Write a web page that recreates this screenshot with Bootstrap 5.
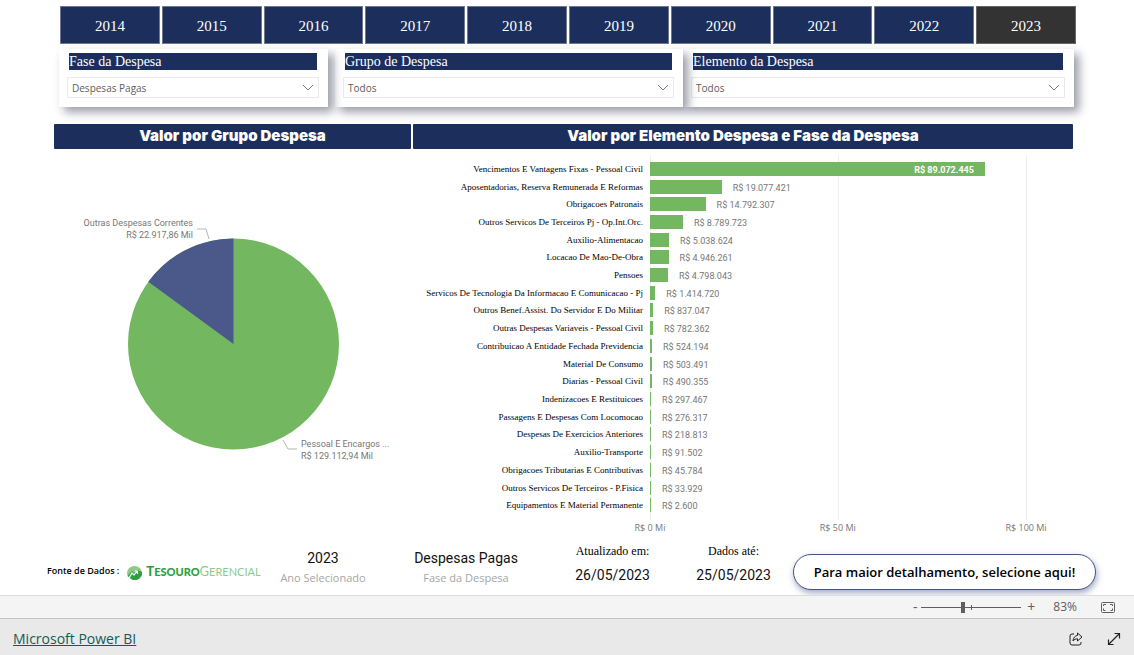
<!DOCTYPE html>
<html lang="pt-BR">
<head>
<meta charset="utf-8">
<meta name="viewport" content="width=device-width, initial-scale=1">
<title>Despesas - Microsoft Power BI</title>
<link href="https://cdn.jsdelivr.net/npm/bootstrap@5.3.0/dist/css/bootstrap.min.css" rel="stylesheet">
<style>
  :root { --navy: #1c2f5c; --leaf: #73b761; --din: Roboto, sans-serif; --segoe: "Open Sans", sans-serif; --times: "Liberation Serif", serif; }
  body { font-family: var(--segoe); color: #111; background: #fff; }
  .years { padding: 6px 58px 0 60px; gap: 2px; }
  .year-btn { height: 38px; padding-top: 3px; background: var(--navy); color: #fff; border: 1px solid #6f7891; font: 15px/20px var(--times); }
  .year-btn.active { background: #333; border-color: #666; }
  .slicers { display: grid; grid-template-columns: 276fr 348fr 391fr; padding: 5px 60px 0 59px; }
  .slicer { position: relative; height: 58px; padding: 4px 9px 0 8px; background: #fff; box-shadow: 5px 5px 9px rgba(28, 35, 60, .45); }
  .slicer:nth-child(1) { z-index: 3; margin-right: 7px; }
  .slicer:nth-child(2) { z-index: 2; }
  .slicer:nth-child(3) { z-index: 1; }
  .slicer label { display: block; height: 17px; margin: 0 2px 7px; background: var(--navy); color: #fff; font: 14px/17px var(--times); }
  .slicer .form-select { height: 21px; padding: 0 24px 0 4px; border: 1px solid #eaeaea; border-radius: 0; color: #605e5c; background-color: transparent; font-size: 10px; line-height: 18px; background-position: right 4px center; background-size: 12px 7px;
    --bs-form-select-bg-img: url("data:image/svg+xml,%3Csvg xmlns='http://www.w3.org/2000/svg' viewBox='0 0 12 7'%3E%3Cpath d='M1 1l5 5 5-5' fill='none' stroke='%23777'/%3E%3C/svg%3E"); }
  .charts { display: grid; grid-template-columns: 357fr 660fr; gap: 0 2px; padding: 17px 61px 0 54px; }
  .chart-title { height: 25px; margin: 0; background: var(--navy); color: #fff; border-radius: 1px; font: 900 15px/23px Inter, sans-serif; text-align: center; }
  .pie { display: block; width: 100%; height: 380px; font: 9px var(--din); }
  .plot { position: relative; padding: 11px 0 6px; }
  .gridlines { position: absolute; top: 6px; right: 0; bottom: 0; left: 237px; }
  .gridlines i { position: absolute; top: 0; bottom: 0; width: 1px; background: #eee; }
  .bars { position: relative; display: flex; flex-direction: column; height: 354px; }
  .bar-row { display: flex; flex: 1 1 0; align-items: center; }
  .bar-name { flex: 0 0 230px; margin-right: 7px; text-align: right; white-space: nowrap; color: #000; font: 9px/12px var(--times); }
  .bar-track { flex: 1; display: flex; align-items: center; }
  .bar-fill { flex: none; height: 14px; min-width: 1px; background: var(--leaf); }
  .bar-val { padding: 2px 0 0 11px; color: #777; font: 9px/12px var(--din); white-space: nowrap; }
  .bar-fill .bar-val { display: block; padding: 2px 11px 0 0; text-align: right; color: #fff; font-weight: 700; }
  .ticks { position: relative; height: 16px; margin-left: 237px; color: #777; font: 9px/16px var(--segoe); }
  .ticks span { position: absolute; transform: translateX(-50%); white-space: nowrap; }
  .facts { height: 59px; padding: 4px 38px 0 47px; }
  .source { width: 215px; padding-top: 22px; color: #000; font: 600 9px/18px var(--segoe); }
  .brand-name { font: 900 11px/18px Lato, sans-serif; color: #2c9f3c; }
  .brand-name b { font-size: 13px; font-weight: inherit; }
  .brand-name .light { font-weight: 400; color: #8fca8b; }
  .fact { text-align: center; white-space: nowrap; }
  .f1 { width: 122px; } .f2 { width: 164px; } .f3 { width: 129px; } .f4 { width: 113px; }
  .fact-num { color: #111; font: 14px/20px var(--din); }
  .fact-cap { color: #a6a6a6; font-size: 11px; line-height: 20px; }
  .fact-head { padding-top: 1px; color: #000; font: 12px/20px var(--times); }
  .detail-btn { height: 36px; width: 303px; margin-top: 14px; border: 1px solid #44557f; border-radius: 18px; background: #fff; color: #000; font: 600 13px/20px var(--segoe); box-shadow: 1px 3px 6px rgba(68, 85, 140, .5); white-space: nowrap; }
  .zoombar { position: relative; height: 23px; padding-right: 19px; background: #f4f4f4; border-top: 1px solid #dcdcdc; color: #605e5c; font-size: 12px; }
  .zoombar button, .embed button { padding: 0; border: 0; background: none; color: inherit; line-height: 1; display: flex; align-items: center; justify-content: center; }
  .zoom-step { width: 12px; font-size: 14px; }
  .zoom-wrap { position: relative; width: 100px; height: 22px; }
  .zoom-wrap i { position: absolute; left: 50%; top: 9px; width: 1px; height: 5px; background: #605e5c; }
  .zoom-range { appearance: none; display: block; width: 100%; height: 22px; margin: 0; background: none; }
  .zoom-range::-webkit-slider-runnable-track { height: 1px; background: #605e5c; }
  .zoom-range::-webkit-slider-thumb { appearance: none; width: 4px; height: 11px; margin-top: -5px; background: #605e5c; }
  .embed { height: 37px; padding: 3px 13px 0; background: #e9e9e9; border-top: 1px solid #c4c4c4; }
  .embed a { color: #0f5c5a; font-size: 14px; line-height: 20px; }
</style>
</head>
<body>
<div class="d-flex flex-column min-vh-100">
  <main class="flex-grow-1">
    <nav class="years d-flex" aria-label="Ano">
      <button class="year-btn flex-fill">2014</button><button class="year-btn flex-fill">2015</button><button class="year-btn flex-fill">2016</button><button class="year-btn flex-fill">2017</button><button class="year-btn flex-fill">2018</button><button class="year-btn flex-fill">2019</button><button class="year-btn flex-fill">2020</button><button class="year-btn flex-fill">2021</button><button class="year-btn flex-fill">2022</button><button class="year-btn active flex-fill">2023</button>
    </nav>

    <section class="slicers">
      <div class="slicer"><label for="fase">Fase da Despesa</label><select id="fase" class="form-select"><option>Despesas Pagas</option></select></div>
      <div class="slicer"><label for="grupo">Grupo de Despesa</label><select id="grupo" class="form-select"><option>Todos</option></select></div>
      <div class="slicer"><label for="elemento">Elemento da Despesa</label><select id="elemento" class="form-select"><option>Todos</option></select></div>
    </section>

    <section class="charts">
      <div>
        <h2 class="chart-title">Valor por Grupo Despesa</h2>
        <svg class="pie" viewBox="0 0 357 380" role="img" aria-label="Valor por grupo de despesa">
          <circle cx="179.500" cy="195" r="105.500" fill="#73b761"/>
          <path d="M179.500 195V89.500A105.500 105.500 0 0 0 94.300 132.800Z" fill="#4a588a"/>
          <path d="M143 80h9l3 10M229 291l5 9h9" fill="none" stroke="#b5b5b5"/>
          <g fill="#777">
            <text x="139" y="77" text-anchor="end">Outras Despesas Correntes</text>
            <text x="139" y="89" text-anchor="end">R$ 22.917,86 Mil</text>
            <text x="247" y="298">Pessoal E Encargos ...</text>
            <text x="247" y="310">R$ 129.112,94 Mil</text>
          </g>
        </svg>
      </div>
      <div>
        <h2 class="chart-title">Valor por Elemento Despesa e Fase da Despesa</h2>
        <div class="plot">
          <div class="gridlines"><i style="left:0%"></i><i style="left:44.400%"></i><i style="left:88.900%"></i></div>
          <div class="bars">
            <div class="bar-row"><span class="bar-name">Vencimentos E Vantagens Fixas - Pessoal Civil</span><div class="bar-track"><div class="bar-fill" style="width:79.170%"><span class="bar-val">R$ 89.072.445</span></div></div></div>
            <div class="bar-row"><span class="bar-name">Aposentadorias, Reserva Remunerada E Reformas</span><div class="bar-track"><div class="bar-fill" style="width:16.960%"></div><span class="bar-val">R$ 19.077.421</span></div></div>
            <div class="bar-row"><span class="bar-name">Obrigacoes Patronais</span><div class="bar-track"><div class="bar-fill" style="width:13.150%"></div><span class="bar-val">R$ 14.792.307</span></div></div>
            <div class="bar-row"><span class="bar-name">Outros Servicos De Terceiros Pj - Op.Int.Orc.</span><div class="bar-track"><div class="bar-fill" style="width:7.810%"></div><span class="bar-val">R$ 8.789.723</span></div></div>
            <div class="bar-row"><span class="bar-name">Auxilio-Alimentacao</span><div class="bar-track"><div class="bar-fill" style="width:4.480%"></div><span class="bar-val">R$ 5.038.624</span></div></div>
            <div class="bar-row"><span class="bar-name">Locacao De Mao-De-Obra</span><div class="bar-track"><div class="bar-fill" style="width:4.400%"></div><span class="bar-val">R$ 4.946.261</span></div></div>
            <div class="bar-row"><span class="bar-name">Pensoes</span><div class="bar-track"><div class="bar-fill" style="width:4.260%"></div><span class="bar-val">R$ 4.798.043</span></div></div>
            <div class="bar-row"><span class="bar-name">Servicos De Tecnologia Da Informacao E Comunicacao - Pj</span><div class="bar-track"><div class="bar-fill" style="width:1.260%"></div><span class="bar-val">R$ 1.414.720</span></div></div>
            <div class="bar-row"><span class="bar-name">Outros Benef.Assist. Do Servidor E Do Militar</span><div class="bar-track"><div class="bar-fill" style="width:0.740%"></div><span class="bar-val">R$ 837.047</span></div></div>
            <div class="bar-row"><span class="bar-name">Outras Despesas Variaveis - Pessoal Civil</span><div class="bar-track"><div class="bar-fill" style="width:0.700%"></div><span class="bar-val">R$ 782.362</span></div></div>
            <div class="bar-row"><span class="bar-name">Contribuicao A Entidade Fechada Previdencia</span><div class="bar-track"><div class="bar-fill" style="width:0.470%"></div><span class="bar-val">R$ 524.194</span></div></div>
            <div class="bar-row"><span class="bar-name">Material De Consumo</span><div class="bar-track"><div class="bar-fill" style="width:0.450%"></div><span class="bar-val">R$ 503.491</span></div></div>
            <div class="bar-row"><span class="bar-name">Diarias - Pessoal Civil</span><div class="bar-track"><div class="bar-fill" style="width:0.440%"></div><span class="bar-val">R$ 490.355</span></div></div>
            <div class="bar-row"><span class="bar-name">Indenizacoes E Restituicoes</span><div class="bar-track"><div class="bar-fill" style="width:0.260%"></div><span class="bar-val">R$ 297.467</span></div></div>
            <div class="bar-row"><span class="bar-name">Passagens E Despesas Com Locomocao</span><div class="bar-track"><div class="bar-fill" style="width:0.250%"></div><span class="bar-val">R$ 276.317</span></div></div>
            <div class="bar-row"><span class="bar-name">Despesas De Exercicios Anteriores</span><div class="bar-track"><div class="bar-fill" style="width:0.190%"></div><span class="bar-val">R$ 218.813</span></div></div>
            <div class="bar-row"><span class="bar-name">Auxilio-Transporte</span><div class="bar-track"><div class="bar-fill" style="width:0.080%"></div><span class="bar-val">R$ 91.502</span></div></div>
            <div class="bar-row"><span class="bar-name">Obrigacoes Tributarias E Contributivas</span><div class="bar-track"><div class="bar-fill" style="width:0.040%"></div><span class="bar-val">R$ 45.784</span></div></div>
            <div class="bar-row"><span class="bar-name">Outros Servicos De Terceiros - P.Fisica</span><div class="bar-track"><div class="bar-fill" style="width:0.030%"></div><span class="bar-val">R$ 33.929</span></div></div>
            <div class="bar-row"><span class="bar-name">Equipamentos E Material Permanente</span><div class="bar-track"><div class="bar-fill" style="width:0%"></div><span class="bar-val">R$ 2.600</span></div></div>
          </div>
        </div>
        <div class="ticks"><span style="left:0%">R$ 0 Mi</span><span style="left:44.400%">R$ 50 Mi</span><span style="left:88.900%">R$ 100 Mi</span></div>
      </div>
    </section>

    <section class="facts d-flex overflow-hidden">
      <div class="source d-flex text-nowrap">
        <span class="me-2">Fonte de Dados :</span>
        <svg class="mt-1 me-1 flex-shrink-0" width="15" height="14" viewBox="0 0 15 14" aria-hidden="true"><ellipse cx="7.500" cy="7" rx="7.500" ry="7" fill="#8cc98a"/><path d="M0.500 10L5 5l2 2 3-3 5 2a7.500 7 0 0 1-9 8z" fill="#2c9f3c"/><path d="M2 12l3-5 2 2 3-4M8 5h2.500v3" fill="none" stroke="#fff" stroke-width="1.200"/></svg>
        <span class="brand-name"><b>T</b>ESOURO<span class="light"><b>G</b>ERENCIAL</span></span>
      </div>
      <div class="fact f1 pt-2"><div class="fact-num">2023</div><div class="fact-cap">Ano Selecionado</div></div>
      <div class="fact f2 pt-2"><div class="fact-num">Despesas Pagas</div><div class="fact-cap">Fase da Despesa</div></div>
      <div class="fact f3"><div class="fact-head mb-1">Atualizado em:</div><div class="fact-num">26/05/2023</div></div>
      <div class="fact f4"><div class="fact-head mb-1">Dados até:</div><div class="fact-num">25/05/2023</div></div>
      <button class="detail-btn ms-auto">Para maior detalhamento, selecione aqui!</button>
    </section>
  </main>

  <div class="zoombar d-flex align-items-center justify-content-end">
    <button class="zoom-step" aria-label="Reduzir">-</button>
    <div class="zoom-wrap"><input class="zoom-range" type="range" min="0" max="100" value="41" aria-label="Zoom"><i></i></div>
    <button class="zoom-step ms-1" aria-label="Ampliar">+</button>
    <span class="ms-3 me-4">83%</span>
    <button aria-label="Ajustar à página"><svg width="14" height="11" viewBox="0 0 14 11" fill="none" stroke="#605e5c"><rect x=".5" y=".5" width="13" height="10" rx="1"/><path d="M5 2.500H2.500V8.500H5M9 2.500h2.500V8.500H9" stroke-dasharray="4 2.500"/></svg></button>
  </div>
  <footer class="embed d-flex align-items-center">
    <a href="#" class="me-auto">Microsoft Power BI</a>
    <button class="me-4" aria-label="Compartilhar"><svg width="14" height="14" viewBox="0 0 14 14" fill="none" stroke="#222" stroke-linejoin="round"><path d="M5 2H3a2 2 0 0 0-2 2v7a2 2 0 0 0 2 2h7a2 2 0 0 0 2-2V10"/><path d="M8.500 1l4.500 4-4.500 4V6.800C6.500 6.800 5.200 7.400 4 9c.2-3.200 2-5.200 4.500-5.600z"/></svg></button>
    <button aria-label="Tela cheia"><svg width="14" height="14" viewBox="0 0 14 14" fill="none" stroke="#222" stroke-width="1.200"><path d="M1.500 12.500l11-11M7.500 1.500h5v5M1.500 7.500v5h5"/></svg></button>
  </footer>
</div>
<script src="https://cdn.jsdelivr.net/npm/bootstrap@5.3.0/dist/js/bootstrap.bundle.min.js"></script>
</body>
</html>
